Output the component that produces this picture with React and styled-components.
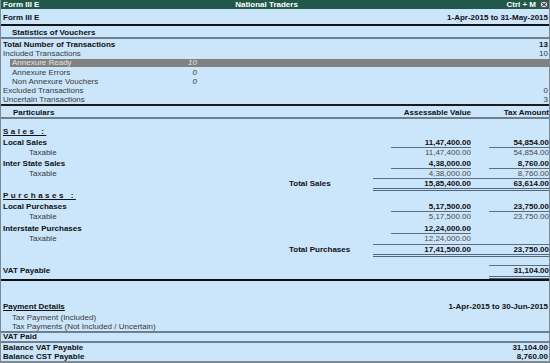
import React from 'react';
import styled, { createGlobalStyle } from 'styled-components';

const GlobalStyle = createGlobalStyle`
  html, body {
    margin: 0;
    padding: 0;
    background: #cbe5fb;
  }
  body {
    font-family: 'Liberation Sans', Arial, sans-serif;
    font-size: 8px;
  }
`;

const stats = [
  { label: 'Total Number of Transactions', right: '13', bold: true },
  { label: 'Included Transactions', right: '10' },
  { label: 'Annexure Ready', mid: '10', indent: 9, active: true },
  { label: 'Annexure Errors', mid: '0', indent: 9 },
  { label: 'Non Annexure Vouchers', mid: '0', indent: 9 },
  { label: 'Excluded Transactions', right: '0' },
  { label: 'Uncertain Transactions', right: '3' },
];

const App = () => (
  <>
    <GlobalStyle />
    <Window>
      <TitleBar>
        <span>Form III E</span>
        <TitleCenter>National Traders</TitleCenter>
        <TitleRight>
          Ctrl + M
          <CloseBox>
            <svg width="6" height="5" viewBox="0 0 6 5">
              <path d="M0.5 0.5 L5.5 4.5 M5.5 0.5 L0.5 4.5" stroke="#222" strokeWidth="1" />
            </svg>
          </CloseBox>
        </TitleRight>
      </TitleBar>

      <HeaderRow>
        <Bold>Form III E</Bold>
        <Bold>1-Apr-2015 to 31-May-2015</Bold>
      </HeaderRow>
      <Rule $size={2} $color="#151515" />

      <SectionHead>Statistics of Vouchers</SectionHead>
      <Rule $size={2} $color="#6f7f8f" />

      <StatList>
        {stats.map((s) => (
          <StatRow key={s.label} $indent={s.indent || 0} $active={s.active}>
            <StatLabel $bold={s.bold}>
              <span>{s.label}</span>
              {s.mid && <MidValue>{s.mid}</MidValue>}
            </StatLabel>
            <RightValue $bold={s.bold}>{s.right}</RightValue>
          </StatRow>
        ))}
      </StatList>
      <Rule $size={2} $color="#1c1c1c" />

      <ColumnHead>
        <Cell $col="1 / 3" $pad={12}>Particulars</Cell>
        <Cell $col="3" $right>Assessable Value</Cell>
        <Cell $col="5" $right>Tax Amount</Cell>
      </ColumnHead>
      <Rule $size={2} $color="#6f7f8f" />

      <Report>
        <Group $top={8}>Sales :</Group>

        <ItemRow $top={2}>
          <Cell $col="1" $bold>Local Sales</Cell>
          <Amount $col="3" $width={80} $bold $rule>11,47,400.00</Amount>
          <Amount $col="5" $bold $rule>54,854.00</Amount>
        </ItemRow>
        <SubRow>
          <Cell $col="1" $pad={28}>Taxable</Cell>
          <Amount $col="3" $width={80}>11,47,400.00</Amount>
          <Amount $col="5">54,854.00</Amount>
        </SubRow>

        <ItemRow $top={2}>
          <Cell $col="1" $bold>Inter State Sales</Cell>
          <Amount $col="3" $width={80} $bold $rule>4,38,000.00</Amount>
          <Amount $col="5" $bold $rule>8,760.00</Amount>
        </ItemRow>
        <SubRow>
          <Cell $col="1" $pad={28}>Taxable</Cell>
          <Amount $col="3" $width={80}>4,38,000.00</Amount>
          <Amount $col="5">8,760.00</Amount>
        </SubRow>

        <TotalRow>
          <TotalLabel $col="2" $bold>Total Sales</TotalLabel>
          <TotalFigures>
            <Amount $col="1" $bold>15,85,400.00</Amount>
            <Amount $col="3" $bold>63,614.00</Amount>
          </TotalFigures>
        </TotalRow>

        <Group $top={0}>Purchases :</Group>

        <ItemRow $top={2}>
          <Cell $col="1" $bold>Local Purchases</Cell>
          <Amount $col="3" $width={80} $bold $rule>5,17,500.00</Amount>
          <Amount $col="5" $bold $rule>23,750.00</Amount>
        </ItemRow>
        <SubRow>
          <Cell $col="1" $pad={28}>Taxable</Cell>
          <Amount $col="3" $width={80}>5,17,500.00</Amount>
          <Amount $col="5">23,750.00</Amount>
        </SubRow>

        <ItemRow $top={3}>
          <Cell $col="1" $bold>Interstate Purchases</Cell>
          <Amount $col="3" $width={80} $bold $rule>12,24,000.00</Amount>
        </ItemRow>
        <SubRow>
          <Cell $col="1" $pad={28}>Taxable</Cell>
          <Amount $col="3" $width={80}>12,24,000.00</Amount>
        </SubRow>

        <TotalRow $top={1}>
          <TotalLabel $col="2" $bold>Total Purchases</TotalLabel>
          <TotalFigures>
            <Amount $col="1" $bold>17,41,500.00</Amount>
            <Amount $col="3" $bold>23,750.00</Amount>
          </TotalFigures>
        </TotalRow>

        <VatRow>
          <TotalLabel $col="1" $bold>VAT Payable</TotalLabel>
          <VatFigure>31,104.00</VatFigure>
        </VatRow>
      </Report>

      <Rule $size={2} $color="#111" />
      <Footer>
        <PayHead>
          <Underlined>Payment Details</Underlined>
          <Bold>1-Apr-2015 to 30-Jun-2015</Bold>
        </PayHead>
        <PayItem $top={2}>Tax Payment (Included)</PayItem>
        <PayItem>Tax Payments (Not Included / Uncertain)</PayItem>
        <Rule $size={2} $color="#6f7f8f" />
        <FootRow $h={8}>
          <Bold>VAT Paid</Bold>
        </FootRow>
        <Rule $size={2} $color="#6f7f8f" />
        <FootRow>
          <Bold>Balance VAT Payable</Bold>
          <Bold>31,104.00</Bold>
        </FootRow>
        <FootRow>
          <Bold>Balance CST Payable</Bold>
          <Bold>8,760.00</Bold>
        </FootRow>
      </Footer>
    </Window>
  </>
);

const Window = styled.div`
  width: 550px;
  height: 363px;
  box-sizing: border-box;
  border-left: 1px solid #7d8a96;
  border-right: 1px solid #7d8a96;
  border-bottom: 2px solid #7d8a96;
  background: #cbe5fb;
  color: #3a3a3a;
  font-family: 'Liberation Sans', Arial, sans-serif;
  font-size: 8px;
  line-height: 9px;
  display: flex;
  flex-direction: column;
  overflow: hidden;
`;

const TitleBar = styled.div`
  height: 9px;
  margin: 0 -1px;
  padding: 0 2px 0 3px;
  background: #22584a;
  color: #fff;
  font-weight: bold;
  display: grid;
  grid-template-columns: 1fr auto 1fr;
  align-items: center;
  line-height: 9px;
`;

const TitleCenter = styled.span`
  margin-right: 18px;
`;

const TitleRight = styled.span`
  display: flex;
  justify-content: flex-end;
  align-items: center;
  gap: 4px;
`;

const CloseBox = styled.span`
  width: 8px;
  height: 7px;
  box-sizing: border-box;
  background: #d6d6d6;
  border: 1px solid #555;
  display: flex;
  align-items: center;
  justify-content: center;
`;

const Bold = styled.span`
  font-weight: bold;
  color: #111;
`;

const HeaderRow = styled.div`
  height: 15px;
  padding: 0 1px 0 2px;
  display: flex;
  justify-content: space-between;
  align-items: center;
  padding-top: 1px;
  box-sizing: border-box;
`;

const Rule = styled.div`
  height: ${(p) => p.$size}px;
  flex-shrink: 0;
  background: ${(p) => p.$color};
`;

const SectionHead = styled.div`
  height: 11px;
  padding-left: 11px;
  font-weight: bold;
  color: #111;
  display: flex;
  align-items: center;
  padding-top: 1px;
  box-sizing: border-box;
`;

const StatList = styled.div`
  padding-top: 1px;
  display: flex;
  flex-direction: column;
`;

const StatRow = styled.div`
  display: grid;
  grid-template-columns: ${(p) => 196 - p.$indent}px 1fr;
  margin-left: ${(p) => p.$indent}px;
  height: ${(p) => (p.$active ? 8 : 9)}px;
  line-height: ${(p) => (p.$active ? 8 : 9)}px;
  margin-top: ${(p) => (p.$active ? 1 : 0)}px;
  margin-bottom: ${(p) => (p.$active ? 1 : 0)}px;
  padding-right: 1px;
  background: ${(p) => (p.$active ? '#818181' : 'transparent')};
  color: ${(p) => (p.$active ? '#e4e4e4' : '#3a3a3a')};
`;

const StatLabel = styled.div`
  display: flex;
  justify-content: space-between;
  padding-left: 2px;
  font-weight: ${(p) => (p.$bold ? 'bold' : 'normal')};
  color: ${(p) => (p.$bold ? '#111' : 'inherit')};
`;

const MidValue = styled.span`
  font-style: italic;
`;

const RightValue = styled.div`
  text-align: right;
  font-weight: ${(p) => (p.$bold ? 'bold' : 'normal')};
  color: ${(p) => (p.$bold ? '#111' : 'inherit')};
`;

const columns = `286px 86px 98px 18px 60px`;

const ColumnHead = styled.div`
  display: grid;
  grid-template-columns: ${columns};
  height: 10px;
  align-items: center;
  font-weight: bold;
  color: #111;
  padding-top: 1px;
`;

const Cell = styled.div`
  grid-column: ${(p) => p.$col};
  padding-left: ${(p) => (p.$pad != null ? p.$pad : 2)}px;
  text-align: ${(p) => (p.$right ? 'right' : 'left')};
  font-weight: ${(p) => (p.$bold ? 'bold' : 'inherit')};
  color: ${(p) => (p.$bold ? '#111' : 'inherit')};
  white-space: nowrap;
`;

const TotalLabel = styled(Cell)`
  padding-top: 1px;
`;

const Amount = styled.div`
  grid-column: ${(p) => p.$col};
  justify-self: end;
  width: ${(p) => (p.$width ? `${p.$width}px` : '100%')};
  box-sizing: border-box;
  text-align: right;
  font-weight: ${(p) => (p.$bold ? 'bold' : 'normal')};
  color: ${(p) => (p.$bold ? '#111' : '#4a4a4a')};
  border-bottom: ${(p) => (p.$rule ? '1px solid #5d6e7f' : 'none')};
`;

const Report = styled.div`
  display: flex;
  flex-direction: column;
`;

const Group = styled.div`
  margin-top: ${(p) => p.$top}px;
  height: 9px;
  padding-left: 2px;
  font-weight: bold;
  color: #111;
  letter-spacing: 2.5px;
  text-decoration: underline;
  text-underline-offset: 1px;
`;

const ItemRow = styled.div`
  display: grid;
  grid-template-columns: ${columns};
  margin-top: ${(p) => p.$top || 0}px;
  height: 10px;
`;

const SubRow = styled.div`
  display: grid;
  grid-template-columns: ${columns};
  height: 9px;
`;

const TotalRow = styled.div`
  display: grid;
  grid-template-columns: ${columns};
  margin-top: ${(p) => p.$top || 0}px;
`;

const TotalFigures = styled.div`
  grid-column: 3 / 6;
  display: grid;
  grid-template-columns: 98px 18px 60px;
  height: 9px;
  border-top: 1px solid #5d6e7f;
  border-bottom: 3px double #52657a;
`;

const VatRow = styled.div`
  display: grid;
  grid-template-columns: ${columns};
  margin-top: 8px;
  align-items: start;
`;

const VatFigure = styled.div`
  grid-column: 5;
  text-align: right;
  height: 10px;
  line-height: 10px;
  font-weight: bold;
  color: #111;
  border-top: 1px solid #5d6e7f;
  border-bottom: 3px double #52657a;
`;

const Footer = styled.div`
  margin-top: auto;
  display: flex;
  flex-direction: column;
`;

const PayHead = styled.div`
  height: 9px;
  margin-top: 1px;
  padding: 0 1px 0 2px;
  display: flex;
  justify-content: space-between;
`;

const Underlined = styled(Bold)`
  text-decoration: underline;
  text-underline-offset: 1px;
`;

const PayItem = styled.div`
  height: 9px;
  margin-top: ${(p) => p.$top || 0}px;
  padding-left: 11px;
`;

const FootRow = styled.div`
  height: ${(p) => p.$h || 9}px;
  line-height: ${(p) => p.$h || 9}px;
  padding: 0 1px 0 2px;
  display: flex;
  justify-content: space-between;
`;

export default App;
